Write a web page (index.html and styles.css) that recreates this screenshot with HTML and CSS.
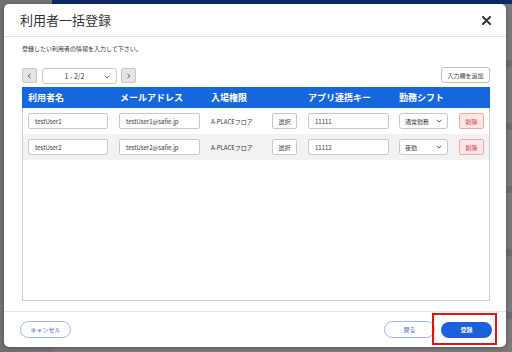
FILE: index.html
```html
<!DOCTYPE html>
<html lang="ja">
<head>
<meta charset="utf-8">
<link rel="stylesheet" href="styles.css">
</head>
<body>
<div class="app">
  <aside class="side"></aside>
  <main class="main">
    <div class="topbar"></div>
    <div class="bgrow"></div>
    <div class="bgrow"></div>
    <div class="bgrow"></div>
    <div class="bgrow"></div>
    <div class="bgrow"></div>
  </main>
</div>

<div class="modal">
  <header class="m-head">
    <h1 class="m-title">利用者一括登録</h1>
    <svg class="close" width="9" height="9" viewBox="0 0 9 9"><path d="M1 1L8 8M8 1L1 8" stroke="#333" stroke-width="2" stroke-linecap="round"/></svg>
  </header>
  <section class="m-body">
    <p class="lead">登録したい利用者の情報を入力して下さい。</p>
    <div class="pager">
      <button class="pbtn"><svg width="5" height="6" viewBox="0 0 5 6"><path d="M3.5 0.8L1.3 3L3.5 5.2" fill="none" stroke="#555" stroke-width="1"/></svg></button>
      <div class="psel">1 - 2/2<svg class="chev" width="6" height="4" viewBox="0 0 6 4"><path d="M0.7 0.8L3 3.1L5.3 0.8" fill="none" stroke="#666" stroke-width="1"/></svg></div>
      <button class="pbtn"><svg width="5" height="6" viewBox="0 0 5 6"><path d="M1.5 0.8L3.7 3L1.5 5.2" fill="none" stroke="#555" stroke-width="1"/></svg></button>
      <button class="addbtn">入力欄を追加</button>
    </div>
    <div class="table">
      <div class="trow thead">
        <div>利用者名</div>
        <div>メールアドレス</div>
        <div>入場権限</div>
        <div>アプリ連携キー</div>
        <div>勤務シフト</div>
        <div></div>
      </div>
      <div class="trow">
        <div><span class="inp w79">testUser1</span></div>
        <div><span class="inp w80 ml-1">testUser1@safie.jp</span></div>
        <div class="perm"><span>A-PLACEフロア</span><button class="sbtn">選択</button></div>
        <div><span class="inp w80">11111</span></div>
        <div><span class="sel">通常勤務<svg class="chev" width="6" height="4" viewBox="0 0 6 4"><path d="M0.7 0.8L3 3.1L5.3 0.8" fill="none" stroke="#555" stroke-width="1"/></svg></span></div>
        <div><button class="del">削除</button></div>
      </div>
      <div class="trow alt">
        <div><span class="inp w79">testUser2</span></div>
        <div><span class="inp w80 ml-1">testUser2@safie.jp</span></div>
        <div class="perm"><span>A-PLACEフロア</span><button class="sbtn">選択</button></div>
        <div><span class="inp w80">11112</span></div>
        <div><span class="sel">夜勤<svg class="chev" width="6" height="4" viewBox="0 0 6 4"><path d="M0.7 0.8L3 3.1L5.3 0.8" fill="none" stroke="#555" stroke-width="1"/></svg></span></div>
        <div><button class="del">削除</button></div>
      </div>
    </div>
  </section>
  <footer class="m-foot">
    <button class="obtn">キャンセル</button>
    <div class="right">
      <button class="obtn">戻る</button>
      <span class="hl"><button class="pri">登録</button></span>
    </div>
  </footer>
</div>
</body>
</html>
```
FILE: styles.css
```css
* { box-sizing: border-box; }
html, body { margin: 0; padding: 0; }
body {
  width: 512px; height: 352px; overflow: hidden;
  font-family: "Noto Sans CJK JP", "Noto Sans", sans-serif;
  background: #7a7a7a;
  position: relative;
}
button { font-family: inherit; cursor: pointer; padding: 0; margin: 0; }

.app { display: flex; height: 352px; }
.side { width: 52px; background: #727272; }
.main { flex: 1; display: flex; flex-direction: column; }
.topbar { height: 4px; background: #0c2a66; }
.bgrow { height: 63px; border-bottom: 7px solid #6c6c6c; margin-top: 0; }
.bgrow:first-of-type { height: 44px; }

.modal {
  position: absolute; left: 4px; top: 4px;
  width: 502px; height: 343px;
  background: #fff; border-radius: 5px;
  display: flex; flex-direction: column;
  box-shadow: 0 1px 4px rgba(0,0,0,0.3);
}
.m-head {
  height: 33px; border-bottom: 1px solid #e2e2e2;
  display: flex; align-items: center; justify-content: space-between;
  padding: 0 15px 0 16px;
}
.m-title { margin: 0; font-size: 13px; font-weight: 400; color: #333; line-height: 16px; }
.close { margin-top: 1px; }

.m-body {
  flex: 1; display: flex; flex-direction: column;
  padding: 8px 16px 10px 18px;
}
.lead { margin: 0; font-size: 6px; line-height: 8px; color: #333; }

.pager { display: flex; align-items: center; margin-top: 15px; height: 15px; }
.pbtn {
  width: 15px; height: 15px; background: #e4e4e4; border: 1px solid #c8c8c8; border-radius: 2px;
  display: flex; align-items: center; justify-content: center;
}
.psel {
  width: 75px; height: 16px; margin: 0 4px 0 5px;
  border: 1px solid #c8c8c8; border-radius: 3px; background: #fff;
  font-size: 7px; color: #333; display: flex; align-items: center; justify-content: center;
  position: relative; padding-right: 10px;
}
.psel .chev { position: absolute; right: 6px; top: 6px; }
.addbtn {
  margin-left: auto; width: 49px; height: 16px; margin-top: -1px;
  border: 1px solid #bdbdbd; border-radius: 3px; background: #fff;
  font-size: 6px; color: #444;
}

.table { flex: 1; margin-top: 4px; border: 1px solid #d0d0d0; border-top: 0; }
.trow {
  display: grid; grid-template-columns: 92px 91px 97px 91px 61px 1fr;
  padding-left: 5px; height: 26px; align-items: center;
}
.trow > div { display: flex; align-items: center; }
.thead { height: 21px; background: #1666dc; color: #fff; font-size: 9px; font-weight: 700; margin: 0 -1px; padding-left: 6px; }
.alt { background: #f2f2f2; }
.inp {
  display: flex; align-items: center; height: 16px;
  border: 1px solid #c8c8c8; border-radius: 2px; background: #fff;
  font-size: 6px; color: #333; padding-left: 6px;
}
.w79 { width: 80px; }
.w80 { width: 81px; }
.ml-1 { margin-left: -1px; }
.perm { font-size: 6px; color: #333; }
.perm span { width: 61px; }
.sbtn {
  width: 25px; height: 16px; border: 1px solid #c8c8c8; border-radius: 2px; background: #fff;
  font-size: 6px; color: #444;
}
.sel {
  display: flex; align-items: center; justify-content: space-between;
  width: 49px; height: 16px; border: 1px solid #c8c8c8; border-radius: 3px; background: #fff;
  font-size: 6px; color: #333; padding: 0 5px 0 5px;
}
.del {
  width: 25px; height: 16px; border: 1px solid #f0a8a8; border-radius: 2px; background: #fde6e6;
  font-size: 6px; color: #e03c3c; margin-left: -1px;
}

.m-foot {
  height: 36px; border-top: 1px solid #e2e2e2;
  display: flex; align-items: center; justify-content: space-between;
  padding: 0 14px 0 16px;
}
.right { display: flex; align-items: center; gap: 6px; }
.obtn {
  width: 51px; height: 17px; border: 1px solid #9fb7ee; border-radius: 9px; background: #fff;
  font-size: 6px; color: #2a62d8;
}
.pri {
  width: 51px; height: 16px; border: 0; border-radius: 8px; background: #1a62dc;
  font-size: 6px; color: #fff; font-weight: 700; display: block;
}
.hl { position: relative; display: block; }
.hl::after {
  content: ""; position: absolute; left: -9px; right: -5px; top: -9px; bottom: -7px;
  border: 2px solid #e81010;
}
```
